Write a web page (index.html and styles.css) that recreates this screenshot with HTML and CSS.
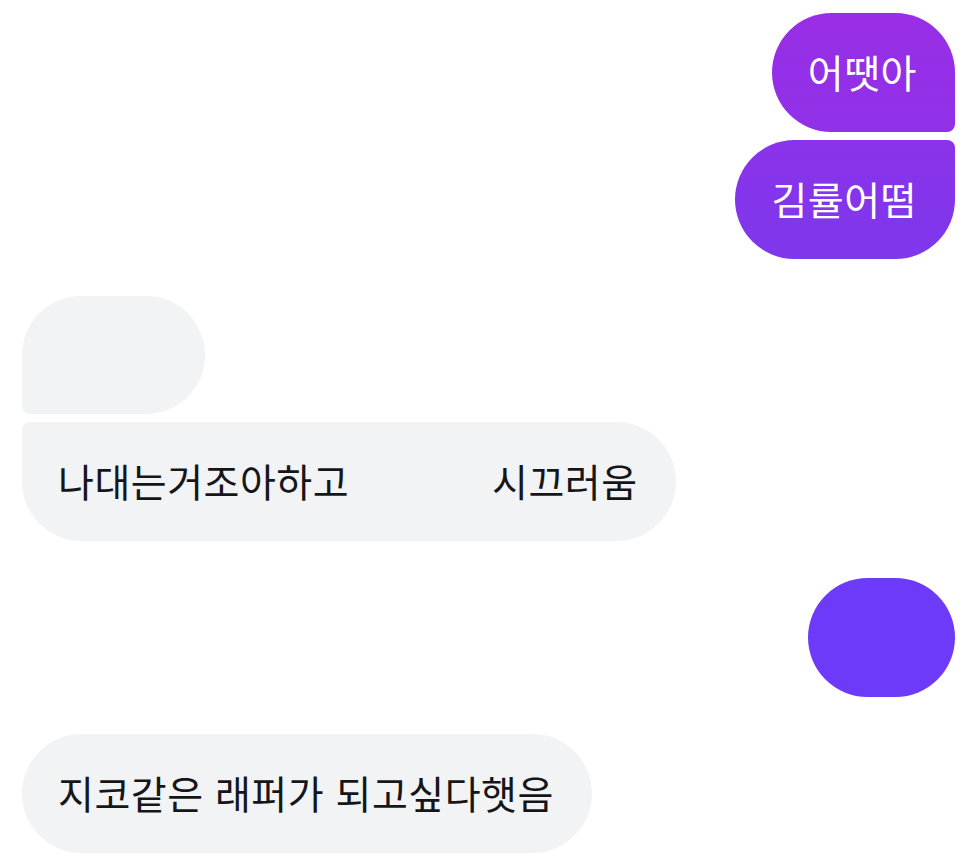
FILE: index.html
```html
<!DOCTYPE html>
<html lang="ko">
<head>
<meta charset="utf-8">
<link rel="stylesheet" href="styles.css">
</head>
<body>
<div class="chat">
  <div class="group sent">
    <div class="bubble out first c1">어땟아</div>
    <div class="bubble out last c2">김률어떰</div>
  </div>
  <div class="group recv">
    <div class="bubble in first blank-a"></div>
    <div class="bubble in last">나대는거조아하고<span class="gap"></span>시끄러움</div>
  </div>
  <div class="group sent">
    <div class="bubble out single c3 blank-b"></div>
  </div>
  <div class="group recv">
    <div class="bubble in single">지코같은 래퍼가 되고싶다햇음</div>
  </div>
</div>
</body>
</html>
```
FILE: styles.css
```css
html, body {
  margin: 0;
  padding: 0;
  background: #ffffff;
}
.chat {
  display: flex;
  flex-direction: column;
  gap: 37px;
  padding: 13px 15px 0 22px;
  font-family: "Noto Sans CJK KR", "Noto Sans", sans-serif;
}
.group {
  display: flex;
  flex-direction: column;
  gap: 8px;
}
.sent { align-items: flex-end; }
.recv { align-items: flex-start; }
.bubble {
  box-sizing: border-box;
  height: 119px;
  padding: 0 38px 0 36px;
  font-size: 39px;
  letter-spacing: 0.5px;
  line-height: 116px;
  white-space: pre;
  border-radius: 60px;
}
.out { color: #ffffff; }
.in { color: #16161a; background: #f2f3f5; }
.c1 { background: linear-gradient(180deg, #982ee6, #9031e8); }
.c2 { background: linear-gradient(180deg, #8a33ea, #7e37ec); }
.c3 { background: #6d3afa; }
.out.first { border-bottom-right-radius: 8px; }
.out.last { border-top-right-radius: 8px; }
.in.first { border-bottom-left-radius: 8px; }
.in.last { border-top-left-radius: 8px; }
.blank-a { width: 183px; height: 118px; }
.blank-b { width: 147px; }
.gap { display: inline-block; width: 143px; }
```
